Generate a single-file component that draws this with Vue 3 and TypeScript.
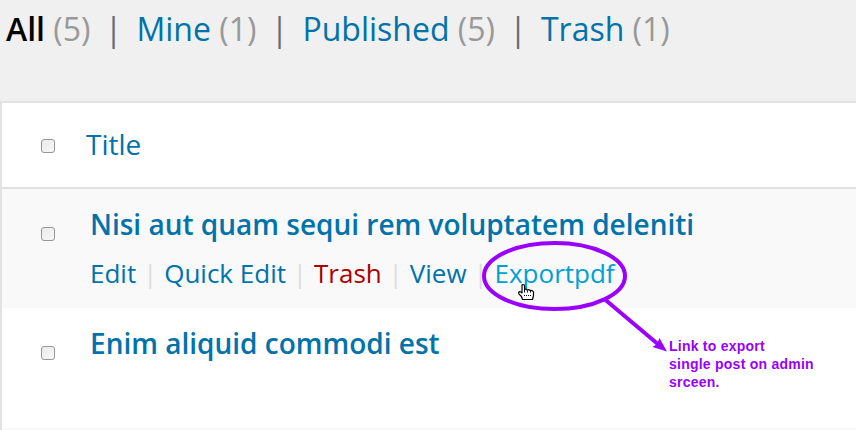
<script setup lang="ts">
interface Filter {
  label: string
  count: number
  current?: boolean
}

interface Action {
  label: string
  kind?: 'trash' | 'hover'
}

interface Post {
  title: string
  actions: Action[]
}

const filters: Filter[] = [
  { label: 'All', count: 5, current: true },
  { label: 'Mine', count: 1 },
  { label: 'Published', count: 5 },
  { label: 'Trash', count: 1 },
]

const posts: Post[] = [
  {
    title: 'Nisi aut quam sequi rem voluptatem deleniti',
    actions: [
      { label: 'Edit' },
      { label: 'Quick Edit' },
      { label: 'Trash', kind: 'trash' },
      { label: 'View' },
      { label: 'Exportpdf', kind: 'hover' },
    ],
  },
  { title: 'Enim aliquid commodi est', actions: [] },
]
</script>

<template>
  <main class="screen">
    <nav class="filters">
      <template v-for="(filter, i) in filters" :key="filter.label">
        <span v-if="i > 0" class="bar">|</span>
        <a class="filter" :class="{ current: filter.current }">{{ filter.label }} <span class="count">({{ filter.count }})</span></a>
      </template>
    </nav>

    <section class="table">
      <header class="head">
        <span class="check"></span>
        <a class="column">Title</a>
      </header>
      <article v-for="post in posts" :key="post.title" class="row">
        <span class="check"></span>
        <div class="body">
          <a class="title">{{ post.title }}</a>
          <div v-if="post.actions.length" class="actions">
            <template v-for="(action, i) in post.actions" :key="action.label">
              <span v-if="i > 0" class="divider">|</span>
              <a :class="action.kind">{{ action.label }}</a>
            </template>
          </div>
        </div>
      </article>
      <div class="next"></div>
    </section>

    <svg class="overlay" width="856" height="430" viewBox="0 0 856 430">
      <ellipse cx="554.5" cy="276" rx="70.5" ry="33" fill="none" stroke="#90f" stroke-width="4" />
      <path d="M605 299.500L659 345" stroke="#90f" stroke-width="4" fill="none" />
      <path d="M667 351.500L652.500 347L657 344L659.500 338Z" fill="#90f" />
      <g transform="translate(518 284)">
        <path d="M4 1.500Q4 .5 5 .5Q6.500 .5 6.500 2V5.500Q8 4.500 9 6Q11 5 12 6.500Q14.500 6 15.500 8V11.500L14.500 15.500H4.500L3.500 12.500L.8 9.800Q.3 8 1.500 7.600Q3 7.500 4 9Z" fill="#fff" stroke="#000" stroke-width="1.200" stroke-linejoin="round" />
        <path d="M6.500 6V8.500M9.500 6.500V8.500M12.500 7V8.500M6.500 11V12M8.500 11V12M10.500 11V12M12.500 11V12" stroke="#000" stroke-width="1" />
      </g>
    </svg>
    <p class="note">Link to export<br />single post on admin<br />srceen.</p>
  </main>
</template>

<style>
body {
  margin: 0;
}
</style>

<style scoped>
.screen {
  position: relative;
  width: 856px;
  height: 430px;
  overflow: hidden;
  background: #f0f0f0;
  color: #0073aa;
  font-family: 'Open Sans', 'Noto Sans', sans-serif;
}

.filters {
  display: flex;
  box-sizing: border-box;
  height: 101px;
  padding: 7px 0 0 6px;
  font-size: 32px;
  line-height: 44px;
  white-space: nowrap;
}

.current {
  color: #000;
  font-weight: 600;
}

.count {
  color: #999;
  font-weight: 400;
}

.bar {
  width: 46px;
  text-align: center;
  color: #666b75;
}

.table {
  border: solid #e2e2e2;
  border-width: 2px 0 0 2px;
  background: #fff;
}

.head,
.row {
  display: flex;
  box-sizing: border-box;
}

.head {
  align-items: center;
  height: 86px;
  padding-left: 39px;
  border-bottom: 2px solid #e1e1e1;
}

.column {
  margin: 0 0 2px 31px;
  font-size: 28px;
  line-height: 40px;
}

.row {
  height: 120px;
  padding-left: 39px;
}

.row:nth-of-type(odd) {
  height: 119px;
  background: #f9f9f9;
}

.check {
  flex: none;
  box-sizing: border-box;
  width: 14px;
  height: 14px;
  border: 1px solid #969696;
  border-radius: 3px;
  background: linear-gradient(135deg, #eaeaea, #f8f8f8);
}

.head .check {
  margin-top: 2px;
}

.row .check {
  margin-top: 38px;
}

.body {
  margin-left: 35px;
  padding-top: 15px;
  white-space: nowrap;
}

.title {
  display: block;
  font-size: 28px;
  font-weight: 600;
  line-height: 40px;
}

.actions {
  display: flex;
  margin-top: 9px;
  font-size: 26px;
  line-height: 40px;
}

.divider {
  width: 28px;
  text-align: center;
  color: #ddd;
}

.trash {
  color: #a00;
}

.hover {
  color: #00a0d2;
}

.next {
  height: 4px;
  background: #f9f9f9;
}

.overlay {
  position: absolute;
  top: 0;
  left: 0;
}

.note {
  position: absolute;
  top: 337px;
  left: 669px;
  margin: 0;
  color: #90f;
  font: bold 14px/18px 'Liberation Sans', Arial, sans-serif;
  letter-spacing: 0.24px;
  white-space: nowrap;
}
</style>
